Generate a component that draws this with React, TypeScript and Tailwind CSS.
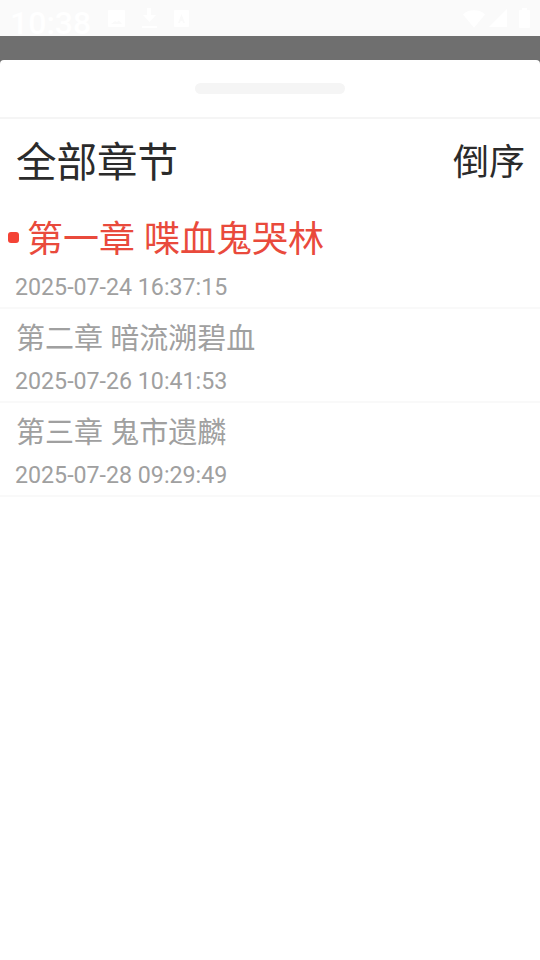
const cjk = "font-['Roboto','Noto_Sans_CJK_SC',sans-serif]";

function StatusBar() {
  return (
    <div className="h-9 bg-[#fafafa] flex items-center pl-[10px] pr-[10px] text-white">
      <span className="text-[32px] font-medium leading-9 font-['Roboto',sans-serif] mt-[10px] w-[80px]">10:38</span>
      <div className="flex items-center ml-[18px] gap-[17px]">
        <svg width="17" height="17" viewBox="0 0 17 17" fill="currentColor"><path d="M1 0h15a1 1 0 0 1 1 1v15a1 1 0 0 1-1 1H1a1 1 0 0 1-1-1V1a1 1 0 0 1 1-1z M3 14h11l-3-3.500-2 1.500-2-1z" fillRule="evenodd" /></svg>
        <svg width="15" height="20" viewBox="0 0 15 20" fill="currentColor"><path d="M5 0h4v7h5l-6.500 7L1 7h4z M0 18h15v2H0z" /></svg>
        <svg width="15" height="17" viewBox="0 0 15 17" fill="currentColor"><path d="M1 0h13a1 1 0 0 1 1 1v15a1 1 0 0 1-1 1H1a1 1 0 0 1-1-1V1a1 1 0 0 1 1-1z M7.500 4 4 13h2l.6-2h1.800l.6 2h2z" fillRule="evenodd" /></svg>
      </div>
      <div className="ml-auto flex items-center gap-[12px]">
        <div className="flex items-center gap-[4px]">
          <svg width="22" height="19" viewBox="0 0 24 20" fill="currentColor"><path d="M12 20 0 5.500C3 2.500 7 1 12 1s9 1.500 12 4.500z" /></svg>
          <svg width="18" height="18" viewBox="0 0 18 18" fill="currentColor"><path d="M18 0v18H0z" /></svg>
        </div>
        <svg width="11" height="20" viewBox="0 0 11 20" fill="currentColor"><path d="M3 0h5v2h2a1 1 0 0 1 1 1v16a1 1 0 0 1-1 1H1a1 1 0 0 1-1-1V3a1 1 0 0 1 1-1h2z" /></svg>
      </div>
    </div>
  );
}

function Chapter({ title, date, active }: { title: string; date: string; active?: boolean }) {
  return (
    <div className="h-[94px] border-b-2 border-[#f9f9f9] pl-[15px] flex flex-col">
      {active ? (
        <div className="h-[57px] flex items-center relative">
          <span className="absolute left-[-7px] top-[17px] w-[11px] h-[11px] rounded-[3px] bg-[#f44336]" />
          <span className={`pl-[12px] mt-[-6px] text-[36px] leading-[57px] text-[#e94a3c] whitespace-pre ${cjk}`}>{title}</span>
        </div>
      ) : (
        <div className="h-[57px] flex items-center">
          <span className={`pl-[1px] mt-[4px] text-[29px] leading-[57px] text-[#a0a0a0] whitespace-pre ${cjk}`}>{title}</span>
        </div>
      )}
      <span className={`text-[23.2px] leading-[28px] mt-px text-[#a0a0a0] ${cjk}`}>{date}</span>
    </div>
  );
}

export default function App() {
  return (
    <div className="w-[540px] h-[960px] overflow-hidden bg-[#6f6f6f] flex flex-col">
      <StatusBar />
      <div className="h-6 shrink-0" />
      <div className="flex-1 bg-white rounded-t-[4px] flex flex-col">
        <div className="h-[59px] border-b-2 border-[#f5f5f5] flex items-center justify-center shrink-0">
          <div className="w-[150px] h-[11px] rounded-full bg-[#f5f5f5]" />
        </div>
        <div className="h-[96px] pb-[8px] flex items-center justify-between pl-[16px] pr-[15px] text-[#2b2b2b] shrink-0">
          <span className={`text-[40.5px] leading-[88px] ${cjk}`}>全部章节</span>
          <span className={`text-[36px] leading-[88px] ${cjk}`}>倒序</span>
        </div>
        <Chapter active title="第一章 喋血鬼哭林" date="2025-07-24 16:37:15" />
        <Chapter title="第二章 暗流溯碧血" date="2025-07-26 10:41:53" />
        <Chapter title="第三章 鬼市遗麟" date="2025-07-28 09:29:49" />
      </div>
    </div>
  );
}
